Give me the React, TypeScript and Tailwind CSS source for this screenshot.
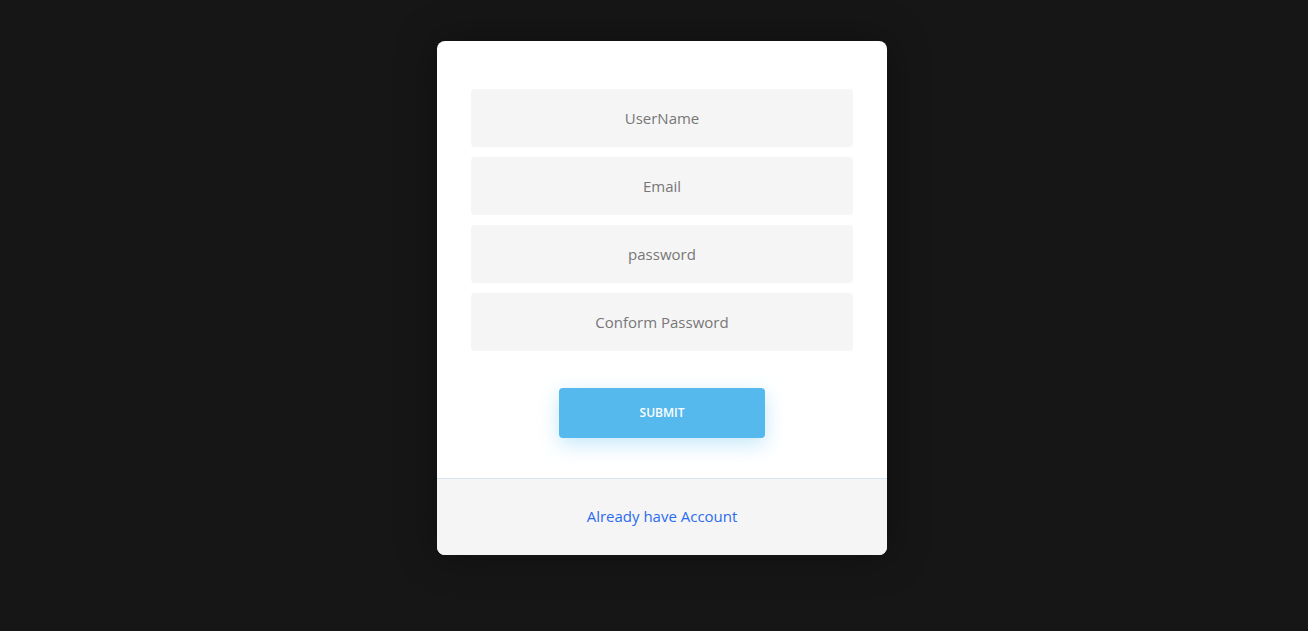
export default function App() {
  const fields = [
    { placeholder: "UserName", type: "text" },
    { placeholder: "Email", type: "email" },
    { placeholder: "password", type: "password" },
    { placeholder: "Conform Password", type: "password" },
  ]

  return (
    <div className="min-h-screen bg-[#161616] pt-[41px] pl-4 font-['Open_Sans','Noto_Sans',sans-serif]">
      <div className="mx-auto w-[450px] overflow-hidden rounded-lg bg-white shadow-[0_0_40px_rgba(0,0,0,0.35)]">
        <form className="flex flex-col px-[34px] pt-12 pb-10" onSubmit={(e) => e.preventDefault()}>
          <div className="flex flex-col gap-[10px]">
            {fields.map((f) => (
              <input
                key={f.placeholder}
                type={f.type}
                placeholder={f.placeholder}
                className="h-[58px] w-full rounded bg-[#f5f5f5] text-center text-[15px] text-[#555] outline-none placeholder:text-[#777]"
              />
            ))}
          </div>
          <button
            type="submit"
            className="mx-auto mt-[37px] h-[50px] w-[206px] rounded bg-[#55b9ed] text-xs font-semibold text-white shadow-[0_6px_20px_rgba(85,185,237,0.35)]"
          >
            SUBMIT
          </button>
        </form>
        <div className="flex h-[77px] items-center justify-center border-t border-[#d6e6f3] bg-[#f5f5f5] pb-[2px]">
          <a href="#" className="text-[15px] text-[#2b6bf0]">
            Already have Account
          </a>
        </div>
      </div>
    </div>
  )
}
